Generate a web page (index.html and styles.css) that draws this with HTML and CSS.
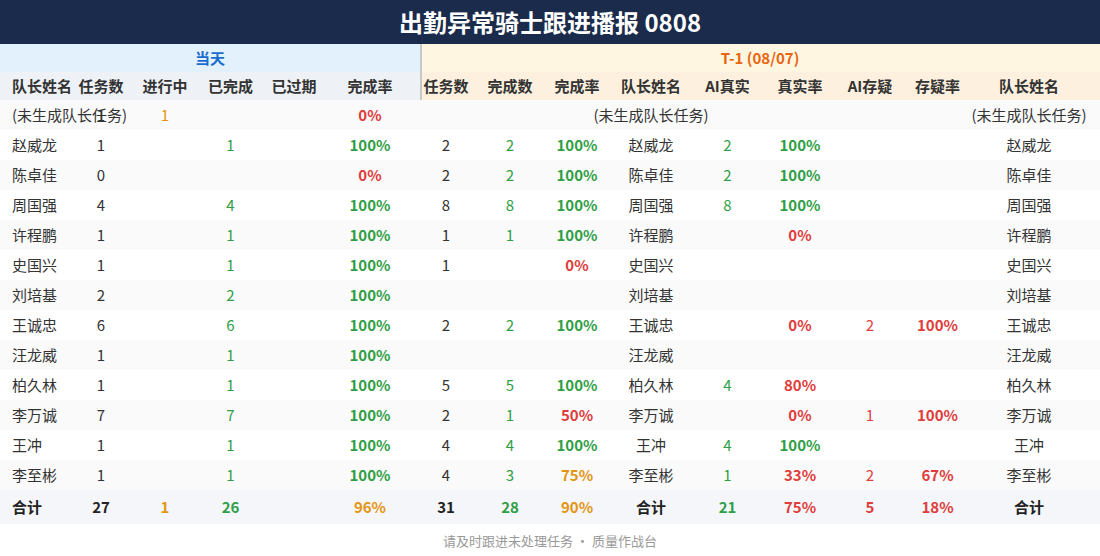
FILE: index.html
```html
<!DOCTYPE html>
<html lang="zh-CN">
<head>
<meta charset="utf-8">
<title>出勤异常骑士跟进播报 0808</title>
<link rel="stylesheet" href="styles.css">
</head>
<body>
<div class="page">
  <header class="title">出勤异常骑士跟进播报 0808</header>
  <table class="report">
    <colgroup>
      <col style="width:70px"><col style="width:62px"><col style="width:66px"><col style="width:65px"><col style="width:62px"><col style="width:95px">
      <col style="width:58px"><col style="width:64px"><col style="width:70px"><col style="width:78px"><col style="width:75px"><col style="width:70px"><col style="width:70px"><col style="width:65px"><col style="width:130px">
    </colgroup>
    <thead>
      <tr class="group">
        <th colspan="6" class="g-today">当天</th>
        <th colspan="9" class="g-prev div">T-1 (08/07)</th>
      </tr>
      <tr class="cols">
        <th class="l first">队长姓名</th><th class="l">任务数</th><th class="l">进行中</th><th class="l">已完成</th><th class="l">已过期</th><th class="l c6">完成率</th>
        <th class="r div c7">任务数</th><th class="r">完成数</th><th class="r">完成率</th><th class="r">队长姓名</th><th class="r">AI真实</th><th class="r">真实率</th><th class="r">AI存疑</th><th class="r">存疑率</th><th class="r last">队长姓名</th>
      </tr>
    </thead>
    <tbody>
      <tr>
        <td class="first name">(未生成队长任务)</td><td>1</td><td class="o">1</td><td></td><td></td><td class="c6 rate red">0%</td>
        <td class="c7"></td><td></td><td></td><td><div class="ctr">(未生成队长任务)</div></td><td></td><td></td><td></td><td></td><td class="last">(未生成队长任务)</td>
      </tr>
      <tr>
        <td class="first name">赵威龙</td><td>1</td><td></td><td class="g">1</td><td></td><td class="c6 rate grn">100%</td>
        <td class="c7">2</td><td class="g">2</td><td class="rate grn">100%</td><td>赵威龙</td><td class="g">2</td><td class="rate grn">100%</td><td></td><td></td><td class="last">赵威龙</td>
      </tr>
      <tr>
        <td class="first name">陈卓佳</td><td>0</td><td></td><td></td><td></td><td class="c6 rate red">0%</td>
        <td class="c7">2</td><td class="g">2</td><td class="rate grn">100%</td><td>陈卓佳</td><td class="g">2</td><td class="rate grn">100%</td><td></td><td></td><td class="last">陈卓佳</td>
      </tr>
      <tr>
        <td class="first name">周国强</td><td>4</td><td></td><td class="g">4</td><td></td><td class="c6 rate grn">100%</td>
        <td class="c7">8</td><td class="g">8</td><td class="rate grn">100%</td><td>周国强</td><td class="g">8</td><td class="rate grn">100%</td><td></td><td></td><td class="last">周国强</td>
      </tr>
      <tr>
        <td class="first name">许程鹏</td><td>1</td><td></td><td class="g">1</td><td></td><td class="c6 rate grn">100%</td>
        <td class="c7">1</td><td class="g">1</td><td class="rate grn">100%</td><td>许程鹏</td><td></td><td class="rate red">0%</td><td></td><td></td><td class="last">许程鹏</td>
      </tr>
      <tr>
        <td class="first name">史国兴</td><td>1</td><td></td><td class="g">1</td><td></td><td class="c6 rate grn">100%</td>
        <td class="c7">1</td><td></td><td class="rate red">0%</td><td>史国兴</td><td></td><td></td><td></td><td></td><td class="last">史国兴</td>
      </tr>
      <tr>
        <td class="first name">刘培基</td><td>2</td><td></td><td class="g">2</td><td></td><td class="c6 rate grn">100%</td>
        <td class="c7"></td><td></td><td></td><td>刘培基</td><td></td><td></td><td></td><td></td><td class="last">刘培基</td>
      </tr>
      <tr>
        <td class="first name">王诚忠</td><td>6</td><td></td><td class="g">6</td><td></td><td class="c6 rate grn">100%</td>
        <td class="c7">2</td><td class="g">2</td><td class="rate grn">100%</td><td>王诚忠</td><td></td><td class="rate red">0%</td><td class="rd">2</td><td class="rate red">100%</td><td class="last">王诚忠</td>
      </tr>
      <tr>
        <td class="first name">汪龙威</td><td>1</td><td></td><td class="g">1</td><td></td><td class="c6 rate grn">100%</td>
        <td class="c7"></td><td></td><td></td><td>汪龙威</td><td></td><td></td><td></td><td></td><td class="last">汪龙威</td>
      </tr>
      <tr>
        <td class="first name">柏久林</td><td>1</td><td></td><td class="g">1</td><td></td><td class="c6 rate grn">100%</td>
        <td class="c7">5</td><td class="g">5</td><td class="rate grn">100%</td><td>柏久林</td><td class="g">4</td><td class="rate red">80%</td><td></td><td></td><td class="last">柏久林</td>
      </tr>
      <tr>
        <td class="first name">李万诚</td><td>7</td><td></td><td class="g">7</td><td></td><td class="c6 rate grn">100%</td>
        <td class="c7">2</td><td class="g">1</td><td class="rate red">50%</td><td>李万诚</td><td></td><td class="rate red">0%</td><td class="rd">1</td><td class="rate red">100%</td><td class="last">李万诚</td>
      </tr>
      <tr>
        <td class="first name">王冲</td><td>1</td><td></td><td class="g">1</td><td></td><td class="c6 rate grn">100%</td>
        <td class="c7">4</td><td class="g">4</td><td class="rate grn">100%</td><td>王冲</td><td class="g">4</td><td class="rate grn">100%</td><td></td><td></td><td class="last">王冲</td>
      </tr>
      <tr>
        <td class="first name">李至彬</td><td>1</td><td></td><td class="g">1</td><td></td><td class="c6 rate grn">100%</td>
        <td class="c7">4</td><td class="g">3</td><td class="rate org">75%</td><td>李至彬</td><td class="g">1</td><td class="rate red">33%</td><td class="rd">2</td><td class="rate red">67%</td><td class="last">李至彬</td>
      </tr>
    </tbody>
    <tfoot>
      <tr class="total">
        <td class="first name">合计</td><td>27</td><td class="org">1</td><td class="grn">26</td><td></td><td class="c6 org">96%</td>
        <td class="c7">31</td><td class="grn">28</td><td class="org">90%</td><td>合计</td><td class="grn">21</td><td class="red">75%</td><td class="red">5</td><td class="red">18%</td><td class="last">合计</td>
      </tr>
    </tfoot>
  </table>
  <footer class="foot">请及时跟进未处理任务 · 质量作战台</footer>
</div>
</body>
</html>
```

FILE: styles.css
```css
html, body {
  margin: 0;
  padding: 0;
  background: #ffffff;
}

body {
  font-family: "Noto Sans CJK SC", "Noto Sans", sans-serif;
  color: #333333;
  width: 1100px;
}

.page {
  display: flex;
  flex-direction: column;
}

.title {
  height: 44px;
  background: #1b2b4b;
  color: #ffffff;
  font-size: 24px;
  font-weight: 700;
  display: flex;
  align-items: center;
  justify-content: center;
  line-height: 1;
}

.report {
  width: 1100px;
  table-layout: fixed;
  border-collapse: collapse;
  font-size: 15px;
}

.report th,
.report td {
  padding: 0;
  text-align: center;
  vertical-align: middle;
  white-space: nowrap;
  line-height: 1.2;
}

.report th {
  font-weight: 700;
}

.group th {
  height: 28px;
  font-size: 15px;
}

.g-today {
  background: #e3f1fd;
  color: #1a6dd0;
}

.g-prev {
  background: #fff6e2;
  color: #e8650f;
}

.cols th {
  height: 28px;
  color: #333333;
}

.cols .l {
  background: #eef1f6;
}

.cols .r {
  background: #fdf0de;
}

.div {
  box-shadow: inset 2px 0 0 #c8c8c8;
}

.report .first {
  text-align: left;
  padding-left: 12px;
}

.report .last {
  padding-right: 12px;
}

.report .c6 {
  padding-right: 5px;
}

.report .c7 {
  padding-right: 6px;
}

.report tbody td {
  height: 30px;
  color: #333333;
}

.report tbody tr:nth-child(odd) td {
  background: #fafafa;
}

.report tbody tr:nth-child(even) td {
  background: #ffffff;
}

.name {
  overflow: visible;
}

.ctr {
  display: flex;
  justify-content: center;
  width: 100%;
}

.report td.g {
  color: #2f9e45;
}

.report td.o {
  color: #e39512;
}

.report td.rd {
  color: #e03c3c;
}

.report td.rate {
  font-weight: 700;
}

.report td.grn {
  color: #2f9e45;
}

.report td.red {
  color: #e03c3c;
}

.report td.org {
  color: #e39512;
}

.total td {
  height: 34px;
  background: #f4f6fa;
  font-weight: 700;
  color: #222222;
}

.foot {
  height: 32px;
  display: flex;
  align-items: center;
  justify-content: center;
  font-size: 13px;
  color: #999999;
}
```
